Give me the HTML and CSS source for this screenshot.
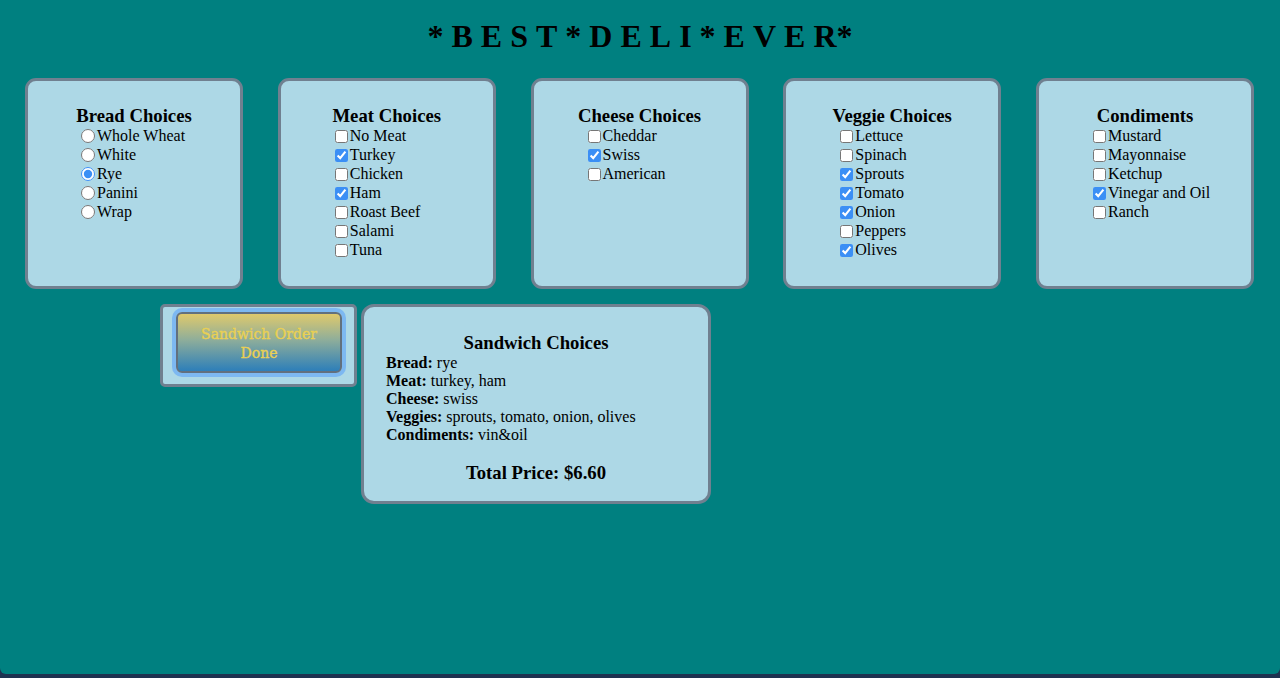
FILE: index.html
```html
<!DOCTYPE html>
<html>
<head>
<meta charset="utf-8">
<title>Best Deli Ever</title>
<link rel="stylesheet" href="styles.css">
</head>
<body>
<div class="page">
  <h1 class="title">*BEST*DELI*EVE<span class="tight">R</span>*</h1>

  <div class="choices">
    <div class="box">
      <h3 class="box-title">Bread Choices</h3>
      <div class="opts opts-radio">
        <label class="opt"><input type="radio" name="bread">Whole Wheat</label>
        <label class="opt"><input type="radio" name="bread">White</label>
        <label class="opt"><input type="radio" name="bread" checked>Rye</label>
        <label class="opt"><input type="radio" name="bread">Panini</label>
        <label class="opt"><input type="radio" name="bread">Wrap</label>
      </div>
    </div>
    <div class="box">
      <h3 class="box-title">Meat Choices</h3>
      <div class="opts">
        <label class="opt"><input type="checkbox">No Meat</label>
        <label class="opt"><input type="checkbox" checked>Turkey</label>
        <label class="opt"><input type="checkbox">Chicken</label>
        <label class="opt"><input type="checkbox" checked>Ham</label>
        <label class="opt"><input type="checkbox">Roast Beef</label>
        <label class="opt"><input type="checkbox">Salami</label>
        <label class="opt"><input type="checkbox">Tuna</label>
      </div>
    </div>
    <div class="box">
      <h3 class="box-title">Cheese Choices</h3>
      <div class="opts">
        <label class="opt"><input type="checkbox">Cheddar</label>
        <label class="opt"><input type="checkbox" checked>Swiss</label>
        <label class="opt"><input type="checkbox">American</label>
      </div>
    </div>
    <div class="box">
      <h3 class="box-title">Veggie Choices</h3>
      <div class="opts">
        <label class="opt"><input type="checkbox">Lettuce</label>
        <label class="opt"><input type="checkbox">Spinach</label>
        <label class="opt"><input type="checkbox" checked>Sprouts</label>
        <label class="opt"><input type="checkbox" checked>Tomato</label>
        <label class="opt"><input type="checkbox" checked>Onion</label>
        <label class="opt"><input type="checkbox">Peppers</label>
        <label class="opt"><input type="checkbox" checked>Olives</label>
      </div>
    </div>
    <div class="box">
      <h3 class="box-title">Condiments</h3>
      <div class="opts">
        <label class="opt"><input type="checkbox">Mustard</label>
        <label class="opt"><input type="checkbox">Mayonnaise</label>
        <label class="opt"><input type="checkbox">Ketchup</label>
        <label class="opt"><input type="checkbox" checked>Vinegar and Oil</label>
        <label class="opt"><input type="checkbox">Ranch</label>
      </div>
    </div>
  </div>

  <div class="order-row">
    <div class="btn-box">
      <button class="done-btn">Sandwich Order Done</button>
    </div>
    <div class="summary">
      <h3 class="summary-title">Sandwich Choices</h3>
      <div class="summary-lines">
        <div class="line"><b>Bread:</b> rye</div>
        <div class="line"><b>Meat:</b> turkey, ham</div>
        <div class="line"><b>Cheese:</b> swiss</div>
        <div class="line"><b>Veggies:</b> sprouts, tomato, onion, olives</div>
        <div class="line"><b>Condiments:</b> vin&amp;oil</div>
      </div>
      <h3 class="total">Total Price: $6.60</h3>
    </div>
  </div>
</div>
</body>
</html>
```

FILE: styles.css
```css
html {
  background: #1e3250;
}
body {
  margin: 0;
  font-family: "Liberation Serif", "Times New Roman", serif;
  color: #000;
}
.page {
  height: 674px;
  background: #008080;
  border-radius: 0 0 6px 6px;
  overflow: hidden;
}
.title {
  margin: 0;
  padding-top: 18px;
  padding-left: 8px;
  height: 37px;
  line-height: 37px;
  font-size: 32px;
  font-weight: bold;
  text-align: center;
  letter-spacing: 8px;
}
.tight {
  letter-spacing: 0;
}
.choices {
  display: flex;
  gap: 34.75px;
  padding-left: 25px;
  margin-top: 23px;
}
.box {
  box-sizing: border-box;
  width: 218px;
  height: 211px;
  background: #add8e6;
  border: 3px solid #708090;
  border-radius: 11px;
  padding-top: 24px;
}
.box-title {
  margin: 0;
  font-size: 18.72px;
  font-weight: bold;
  line-height: 21.5px;
  text-align: center;
}
.opts {
  padding-left: 54px;
  accent-color: #3b8ff5;
}
.opts-radio {
  padding-left: 53px;
}
.opt {
  display: flex;
  align-items: center;
  height: 19px;
  font-size: 16px;
  white-space: nowrap;
}
.opt input {
  margin: 0 2px 0 0;
  width: 13px;
  height: 13px;
}
.opts-radio .opt input {
  width: 14px;
  height: 14px;
  margin-right: 2px;
}
.order-row {
  display: flex;
  align-items: flex-start;
  gap: 4px;
  padding-left: 160px;
  margin-top: 15px;
}
.btn-box {
  box-sizing: border-box;
  width: 197px;
  height: 83px;
  background: #add8e6;
  border: 3px solid #708090;
  border-radius: 5px;
  padding: 5px 12px 10px 13px;
}
.done-btn {
  box-sizing: border-box;
  width: 166px;
  height: 61px;
  border: 2px solid #62707e;
  border-radius: 6px;
  background: linear-gradient(to bottom, #dfc96c 0%, #8fae9a 45%, #2d7fb9 100%);
  color: #ead053;
  -webkit-text-stroke: 0.35px #ead053;
  font-family: "DejaVu Serif", Georgia, serif;
  font-size: 14px;
  line-height: 19px;
  padding: 3px 6px 0 6px;
  box-shadow: 0 0 0 4px #7db8f1;
  cursor: pointer;
}
.summary {
  box-sizing: border-box;
  width: 350px;
  height: 200px;
  background: #add8e6;
  border: 3px solid #708090;
  border-radius: 13px;
  padding-top: 25px;
}
.summary-title {
  margin: 0;
  font-size: 18.72px;
  font-weight: bold;
  line-height: 21.5px;
  text-align: center;
}
.summary-lines {
  padding-left: 22px;
  font-size: 16px;
  line-height: 18px;
}
.total {
  margin: 18px 0 0 0;
  font-size: 18.72px;
  font-weight: bold;
  line-height: 21.5px;
  text-align: center;
}
```
